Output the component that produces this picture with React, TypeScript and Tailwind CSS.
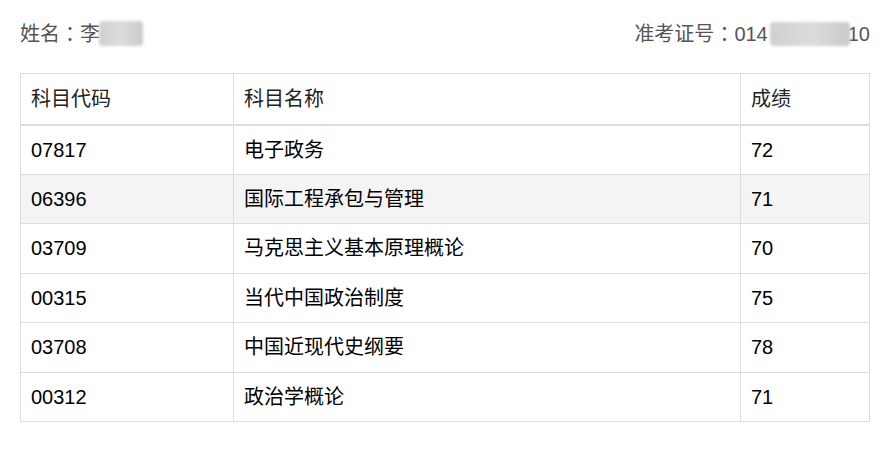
const rows = [
  { code: '07817', name: '电子政务', score: '72' },
  { code: '06396', name: '国际工程承包与管理', score: '71' },
  { code: '03709', name: '马克思主义基本原理概论', score: '70' },
  { code: '00315', name: '当代中国政治制度', score: '75' },
  { code: '03708', name: '中国近现代史纲要', score: '78' },
  { code: '00312', name: '政治学概论', score: '71' },
]

const Blur: React.FC<{ className?: string }> = ({ className }) => (
  <span
    className={`inline-block align-middle rounded-sm bg-gradient-to-r from-[#cfcfcf] via-[#dcdcdc] to-[#c9cacc] blur-[1.5px] ${className ?? ''}`}
  />
)

const Colon = () => <span className="font-['Noto_Sans_CJK_TC',sans-serif]">：</span>

const App: React.FC = () => {
  return (
    <div className="w-[895px] h-[455px] bg-white px-5 text-[20px] font-['Liberation_Sans','Noto_Sans_CJK_SC',sans-serif]">
      <div className="flex justify-between items-center h-[66px] pt-[1px] text-[#555]">
        <div className="flex items-center">
          姓名<Colon />李<Blur className="w-[44px] h-[25px] -ml-[1px]" />
        </div>
        <div className="flex items-center pr-[5px]">
          准考证号<Colon />014<Blur className="w-[80px] h-[24px] ml-[2px]" />
          <span className="-ml-[2px]">10</span>
        </div>
      </div>
      <table className="w-[850px] mt-[7px] border-collapse text-[#222]">
        <thead>
          <tr className="h-[51px]">
            <th className="w-[213px] border border-[#ddd] border-b-2 px-[10px] text-left font-normal">科目代码</th>
            <th className="w-[507px] border border-[#ddd] border-b-2 px-[10px] text-left font-normal">科目名称</th>
            <th className="border border-[#ddd] border-b-2 px-[10px] text-left font-normal">成绩</th>
          </tr>
        </thead>
        <tbody className="text-black">
          {rows.map((r, i) => (
            <tr key={r.code} className={i === 1 ? 'h-[49.5px] bg-[#f4f4f4]' : 'h-[49.5px]'}>
              <td className="border border-[#ddd] px-[10px]">{r.code}</td>
              <td className="border border-[#ddd] px-[10px]">{r.name}</td>
              <td className="border border-[#ddd] px-[10px]">{r.score}</td>
            </tr>
          ))}
        </tbody>
      </table>
    </div>
  )
}

export default App
